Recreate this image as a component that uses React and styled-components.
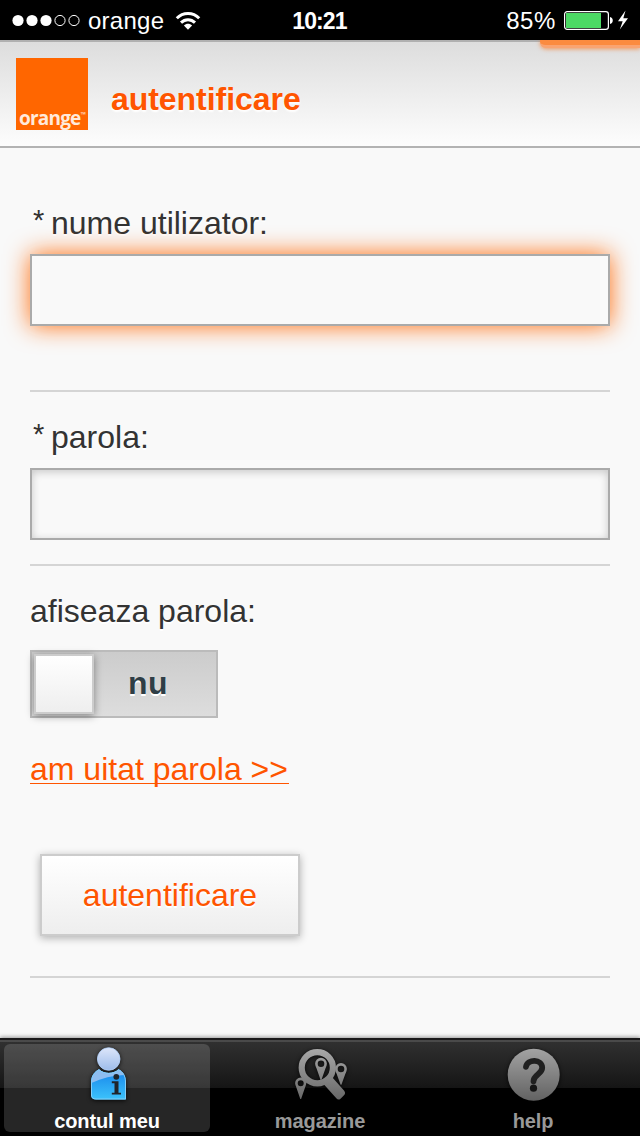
import React, { useState } from 'react';
import styled, { createGlobalStyle } from 'styled-components';

function Login() {
  const [user, setUser] = useState('');
  const [password, setPassword] = useState('');

  return (
    <Content>
      <Label htmlFor="user"><Star>*</Star>nume utilizator:</Label>
      <UserInput id="user" value={user} onChange={(e) => setUser(e.target.value)} />
      <Divider $top={64} />
      <Label htmlFor="password" $top={27}><Star>*</Star>parola:</Label>
      <Input id="password" type="password" value={password} onChange={(e) => setPassword(e.target.value)} />
      <Divider $top={24} />
      <Label as="div" $top={27}>afiseaza parola:</Label>
      <Toggle>
        <Knob />
        <ToggleText>nu</ToggleText>
      </Toggle>
      <ForgotLink href="#">am uitat parola &gt;&gt;</ForgotLink>
      <SubmitButton>autentificare</SubmitButton>
      <Divider $top={40} />
    </Content>
  );
}

function StatusIcons() {
  return (
    <Battery>
      <svg width="66" height="22" viewBox="0 0 66 22">
        <rect x="0.6" y="2.6" width="43.8" height="17.8" rx="2.6" fill="none" stroke="#fff" strokeWidth="1.2" />
        <rect x="2" y="4" width="35" height="15" fill="#4cd964" />
        <path d="M46 8 C49.7 8.5 49.7 14.5 46 15z" fill="#fff" />
        <path d="M61.5 1.5 L54 12.3 H58.7 L55.8 20.5 L64 9.3 H59.3z" fill="#fff" />
      </svg>
    </Battery>
  );
}

function UserIcon() {
  return (
    <TabIcon viewBox="0 0 60 60">
      <defs>
        <linearGradient id="head" x1="0" y1="0" x2="0" y2="1">
          <stop offset="0" stopColor="#dde6fa" />
          <stop offset="1" stopColor="#9dbcea" />
        </linearGradient>
        <linearGradient id="body" x1="0" y1="0" x2="0" y2="1">
          <stop offset="0" stopColor="#1683ea" />
          <stop offset="1" stopColor="#3cc3fb" />
        </linearGradient>
      </defs>
      <path d="M14 51 V38 C14 32 17.5 27.5 22 25.2 C27 30.3 36.5 30.3 41.5 25.2 C46 27.5 49 32 49 38 V55.5 H19 Q14 55.5 14 51z" fill="url(#body)" />
      <path d="M14.4 39 C14.4 32 17.5 27.5 22 25.2 C27 30.3 36.5 30.3 41.5 25.2 C44 26.5 46 28.5 47.2 31 C36 31.5 25 34 14.4 39z" fill="#8ebdf0" />
      <path d="M14.5 51 V38 C14.5 32 17.5 27.8 22 25.7 C27 30.5 36.5 30.5 41.5 25.7 C46 27.8 48.5 32 48.5 38 V55 H19 Q14.5 55 14.5 51z" fill="none" stroke="#83cffb" strokeWidth="1" />
      <circle cx="31.7" cy="15" r="11.3" fill="url(#head)" stroke="#b6d4fc" strokeWidth="0.8" />
      <circle cx="39.3" cy="32.8" r="2.9" fill="#20252b" />
      <path d="M34.8 37.3 H41.5 V48.7 H44 V50.6 H34.8 V48.7 H37.5 V39.3 H34.8z" fill="#20252b" />
    </TabIcon>
  );
}

function SearchIcon() {
  return (
    <TabIcon viewBox="0 0 60 60">
      <defs>
        <linearGradient id="lens" gradientUnits="userSpaceOnUse" x1="0" y1="5" x2="0" y2="56">
          <stop offset="0" stopColor="#a8a8a8" />
          <stop offset="1" stopColor="#676767" />
        </linearGradient>
      </defs>
      <g fill="none" stroke="url(#lens)" strokeWidth="2.6">
        <circle cx="51" cy="25" r="4.6" />
        <circle cx="10.7" cy="39.2" r="4.3" />
      </g>
      <path d="M45.6 27 Q51 33 56.4 27 L51.4 40.8 H50.6z" fill="url(#lens)" />
      <path d="M5.6 41.2 Q10.7 47 15.8 41.2 L11.1 55 H10.3z" fill="url(#lens)" />
      <circle cx="27.3" cy="23.7" r="15.6" fill="none" stroke="url(#lens)" strokeWidth="6.2" />
      <path d="M42 33 L54.2 46.8 Q56 49.3 54 51.3 L50.5 54.7 Q48.3 56.6 46.3 54.3 L33.5 40z" fill="url(#lens)" />
      <circle cx="31" cy="19.7" r="4.6" fill="none" stroke="url(#lens)" strokeWidth="2.6" />
      <path d="M25.6 21.7 Q31 27.5 36.4 21.7 L31.4 36 H30.6z" fill="url(#lens)" />
    </TabIcon>
  );
}

function HelpIcon() {
  return (
    <TabIcon viewBox="0 0 60 60">
      <defs>
        <linearGradient id="disc" x1="0" y1="0" x2="0" y2="1">
          <stop offset="0" stopColor="#a3a3a3" />
          <stop offset="1" stopColor="#626262" />
        </linearGradient>
      </defs>
      <circle cx="30.7" cy="30.7" r="26" fill="url(#disc)" />
      <path d="M23 22.8 C24.5 14.8 39 14.8 39.2 23.8 C39.3 30 30.6 30.5 30.5 37.3" fill="none" stroke="#202020" strokeWidth="5.8" strokeLinecap="round" />
      <circle cx="30.5" cy="44.2" r="3.6" fill="#151515" />
    </TabIcon>
  );
}

function App() {
  return (
    <Screen>
      <GlobalStyle />
      <StatusBar>
        <Carrier>
          <svg width="72" height="14" viewBox="0 0 72 14">
            <g fill="#fff">
              <circle cx="6" cy="6.5" r="5.6" />
              <circle cx="20" cy="6.5" r="5.6" />
              <circle cx="34" cy="6.5" r="5.6" />
            </g>
            <g fill="none" stroke="#fff" strokeWidth="1">
              <circle cx="48" cy="6.5" r="5.1" />
              <circle cx="62" cy="6.5" r="5.1" />
            </g>
          </svg>
          <span>orange</span>
          <Wifi viewBox="0 0 26 20">
            <path d="M1.8 7.2 C8 0.8 18 0.8 24.2 7.2" />
            <path d="M6 11.6 C10 7.7 16 7.7 20 11.6" />
            <path d="M8.9 14.5 C11.4 12.3 14.6 12.3 17.1 14.5 L13 18.8z" fill="#fff" stroke="none" />
          </Wifi>
        </Carrier>
        <Time>10:21</Time>
        <Percent>
          85%
          <StatusIcons />
        </Percent>
      </StatusBar>
      <Header>
        <Logo>orange<sup>™</sup></Logo>
        <Title>autentificare</Title>
        <TopTab />
      </Header>
      <Login />
      <TabBar>
        <Tab $active><UserIcon />contul meu</Tab>
        <Tab><SearchIcon />magazine</Tab>
        <Tab><HelpIcon />help</Tab>
      </TabBar>
    </Screen>
  );
}

export default App;

const GlobalStyle = createGlobalStyle`
  * {
    box-sizing: border-box;
  }
  body {
    margin: 0;
    font-family: "Liberation Sans", Arial, sans-serif;
  }
`;

const Screen = styled.div`
  width: 640px;
  height: 1136px;
  display: flex;
  flex-direction: column;
  overflow: hidden;
  background: #f9f9f9;
`;

const StatusBar = styled.div`
  height: 40px;
  flex-shrink: 0;
  display: grid;
  grid-template-columns: 1fr auto 1fr;
  align-items: center;
  padding: 1px 10px 0 12px;
  background: #000;
  color: #fff;
  font-size: 24px;
  line-height: 28px;
`;

const Carrier = styled.div`
  display: flex;
  align-items: center;
  span {
    margin: 0 11px 0 4px;
    letter-spacing: 0.25px;
  }
`;

const Wifi = styled.svg`
  width: 26px;
  height: 20px;
  fill: none;
  stroke: #fff;
  stroke-width: 3;
`;

const Time = styled.div`
  margin-left: -3px;
  font-weight: bold;
  font-size: 23px;
  letter-spacing: -0.9px;
`;

const Percent = styled.div`
  display: flex;
  justify-content: flex-end;
  align-items: center;
  padding-top: 1px;
  letter-spacing: 0.6px;
`;

const Battery = styled.div`
  display: flex;
  margin: -3px 0 0 8px;
`;

const Header = styled.div`
  position: relative;
  height: 108px;
  flex-shrink: 0;
  display: flex;
  align-items: flex-start;
  padding: 16px 0 0 16px;
  border-top: 2px solid #b0b0b0;
  border-bottom: 2px solid #b3b3b3;
  background: linear-gradient(#dddddd, #fdfdfd);
`;

const Logo = styled.div`
  width: 72px;
  height: 72px;
  padding: 47px 0 0 3px;
  background: #ff6600;
  color: #ffeadb;
  font-family: "Open Sans", sans-serif;
  font-weight: bold;
  font-size: 19px;
  line-height: 26px;
  letter-spacing: -0.8px;
  white-space: nowrap;
  sup {
    font-size: 7px;
    line-height: 0;
    font-weight: normal;
    vertical-align: 8px;
  }
`;

const Title = styled.h1`
  margin: 23px 0 0 23px;
  color: #ff5500;
  font-size: 32px;
  line-height: 36px;
  letter-spacing: -0.05px;
  text-shadow: 0 2px 2px #fff;
`;

const TopTab = styled.div`
  position: absolute;
  top: -2px;
  right: 0;
  width: 100px;
  height: 8px;
  border-bottom: 3px solid #f9a472;
  border-bottom-left-radius: 6px;
  background: #fb8b40;
  box-shadow: 0 1px 4px rgba(255, 102, 0, 0.6);
  clip-path: inset(0 0 -8px -8px);
`;

const Content = styled.div`
  flex: 1;
  display: flex;
  flex-direction: column;
  align-items: flex-start;
  padding: 57px 30px 0;
`;

const Label = styled.label`
  display: flex;
  margin-top: ${(props) => props.$top || 0}px;
  color: #333;
  font-size: 32px;
  line-height: 36px;
  text-shadow: 0 2px 0 #fff;
`;

const Star = styled.span`
  width: 21px;
  padding-left: 3px;
  font-size: 29px;
  line-height: 31px;
`;

const Input = styled.input`
  width: 580px;
  height: 72px;
  margin: 13px 0 0;
  padding: 0 12px;
  border: 2px solid #aaa;
  border-radius: 0;
  outline: none;
  background: #f9f9f9;
  font-size: 32px;
  box-shadow: inset 0 2px 8px rgba(0, 0, 0, 0.2);
`;

const UserInput = styled(Input)`
  box-shadow: 0 0 24px rgba(255, 102, 0, 0.95);
`;

const Divider = styled.div`
  width: 100%;
  height: 2px;
  margin-top: ${(props) => props.$top}px;
  background: #d5d5d5;
`;

const Toggle = styled.div`
  display: flex;
  width: 188px;
  height: 68px;
  margin-top: 21px;
  padding: 2px;
  border: 2px solid #bbb;
  background: linear-gradient(#cccccc, #dddddd);
`;

const Knob = styled.div`
  width: 60px;
  height: 60px;
  border: 2px solid #ccc;
  background: linear-gradient(#ffffff, #eeeeee);
  box-shadow: 0 2px 8px rgba(0, 0, 0, 0.4);
`;

const ToggleText = styled.span`
  padding: 11px 0 0 34px;
  color: #2f3e46;
  font-size: 32px;
  font-weight: bold;
  line-height: 36px;
  letter-spacing: 0.5px;
  text-shadow: 0 2px 0 #fff;
`;

const ForgotLink = styled.a`
  width: 259px;
  height: 33px;
  margin-top: 33px;
  border-bottom: 1px solid #ff5500;
  color: #ff5500;
  font-size: 32px;
  line-height: 36px;
  text-decoration: none;
`;

const SubmitButton = styled.button`
  width: 260px;
  height: 82px;
  margin: 70px 0 0 10px;
  padding: 0;
  border: 2px solid #ccc;
  background: linear-gradient(#ffffff, #eeeeee);
  box-shadow: 0 2px 8px rgba(0, 0, 0, 0.3);
  color: #ff5500;
  font-family: inherit;
  font-size: 32px;
  line-height: 36px;
  text-shadow: 0 2px 0 #fff;
`;

const TabBar = styled.div`
  height: 98px;
  flex-shrink: 0;
  display: grid;
  grid-template-columns: 213px 213px 213px;
  padding-top: 4px;
  border-top: 2px solid #1b1a1b;
  background: linear-gradient(#4a4a4a 0 2px, #303030 2px, #151515 48px, #000 48px);
  box-shadow: 0 -1px 4px rgba(0, 0, 0, 0.4);
`;

const Tab = styled.div`
  display: flex;
  flex-direction: column;
  align-items: center;
  height: 88px;
  margin: 0 3px 0 4px;
  gap: 5px;
  border-radius: 6px;
  background: ${(props) => (props.$active ? 'rgba(255, 255, 255, 0.15)' : 'transparent')};
  color: ${(props) => (props.$active ? '#fff' : '#999')};
  font-size: 20px;
  font-weight: bold;
  line-height: 24px;
  letter-spacing: -0.1px;
`;

const TabIcon = styled.svg`
  width: 60px;
  height: 60px;
  flex-shrink: 0;
  filter: drop-shadow(0 1px 2px rgba(0, 0, 0, 0.8));
`;
